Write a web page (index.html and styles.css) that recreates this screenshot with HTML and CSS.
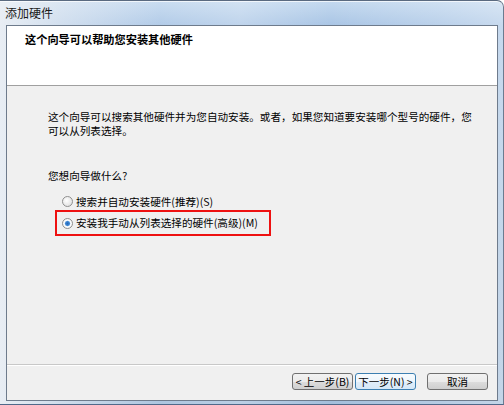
FILE: index.html
```html
<!DOCTYPE html>
<html lang="zh-CN">
<head>
<meta charset="utf-8">
<title>添加硬件</title>
<link rel="stylesheet" href="styles.css">
</head>
<body>
<div class="window">
  <div class="titlebar"><span class="title">添加硬件</span></div>
  <div class="client">
    <div class="header">
      <div class="header-title">这个向导可以帮助您安装其他硬件</div>
    </div>
    <div class="body">
      <p class="intro">这个向导可以搜索其他硬件并为您自动安装。或者，如果您知道要安装哪个型号的硬件，您<br>可以从列表选择。</p>
      <p class="question">您想向导做什么?</p>
      <div class="options">
        <label class="option"><span class="radio"></span><span>搜索并自动安装硬件(推荐)(S)</span></label>
        <label class="option selected"><span class="radio checked"></span><span>安装我手动从列表选择的硬件(高级)(M)</span></label>
      </div>
    </div>
    <div class="footer">
      <div class="btn-pair">
        <button class="btn">&lt; 上一步(B)</button>
        <button class="btn focused">下一步(N) &gt;</button>
      </div>
      <button class="btn cancel">取消</button>
    </div>
  </div>
</div>
</body>
</html>
```
FILE: styles.css
```css
* { box-sizing: border-box; }
html, body { margin: 0; padding: 0; }
body {
  width: 504px;
  height: 405px;
  overflow: hidden;
  background: #fff;
  font-family: "Noto Sans CJK SC", "Liberation Sans", sans-serif;
  color: #000;
}
.window {
  width: 504px;
  height: 405px;
  display: flex;
  flex-direction: column;
  border-radius: 0 7px 0 0;
  background:
    linear-gradient(90deg, rgba(236,240,245,0.95) 0, rgba(236,240,245,0.6) 60px, rgba(255,255,255,0.1) 160px, rgba(255,255,255,0.25) 240px, rgba(255,255,255,0) 330px, rgba(255,255,255,0.2) 440px, rgba(255,255,255,0.35) 504px),
    linear-gradient(180deg, #c4d9ef 0, #a9c5e5 25px, #a4bfdc 100%);
  border-top: 1px solid #5a6a80;
  border-right: 1px solid #6b7b90;
  border-bottom: 1px solid #50698a;
  box-shadow: inset 0 1px 0 rgba(255,255,255,0.7);
  padding: 0 5px 3px 6px;
}
.titlebar {
  height: 24px;
  display: flex;
  align-items: center;
  margin-left: -6px;
}
.title {
  font-size: 12px;
  line-height: 14px;
  padding-left: 5px;
  color: #1a1a1a;
}
.client {
  flex: 1;
  display: flex;
  flex-direction: column;
  background: #f0f0f0;
  border: 1px solid #6e7b8c;
}
.header {
  height: 60px;
  background: #fff;
  border-bottom: 1px solid #a0a0a0;
  padding: 6px 0 0 18px;
}
.header-title {
  font-size: 11.2px;
  font-weight: bold;
  line-height: 14px;
}
.body {
  flex: 1;
  padding: 24px 0 0 41px;
  font-size: 10.6px;
  line-height: 14px;
  border-bottom: 1px solid #c8c8c8;
}
.intro { margin: 0; }
.question { margin: 31px 0 0 0; }
.options {
  margin-top: 11px;
  padding-left: 14px;
  display: flex;
  flex-direction: column;
  gap: 7px;
}
.option {
  display: flex;
  align-items: center;
  gap: 3px;
  height: 15px;
}
.option.selected {
  margin-left: -7px;
  padding-left: 5px;
  width: 216px;
  height: 26px;
  border: 2px solid #ee1111;
  margin-top: -6px;
}
.radio {
  width: 11px;
  height: 11px;
  border-radius: 50%;
  border: 1px solid #8f8f8f;
  background: radial-gradient(circle at 40% 40%, #ffffff 0, #e4e4e4 70%, #d0d0d0 100%);
  flex: none;
}
.radio.checked {
  background: radial-gradient(circle at 50% 50%, #2566b4 0, #3c86d4 2px, #ffffff 3.2px, #e6e6e6 100%);
}
.footer {
  height: 35px;
  border-top: 1px solid #ffffff;
  display: flex;
  align-items: flex-start;
  justify-content: flex-end;
  padding: 7px 9px 0 0;
  gap: 11px;
}
.btn-pair { display: flex; gap: 2px; }
.btn {
  height: 17px;
  width: 61px;
  padding: 0;
  font-family: "Noto Sans CJK SC", "Liberation Sans", sans-serif;
  font-size: 10.5px;
  line-height: 15px;
  color: #000;
  border: 1px solid #707070;
  border-radius: 3px;
  background: linear-gradient(180deg, #f2f2f2 0, #ebebeb 50%, #dddddd 51%, #cfcfcf 100%);
}
.btn.focused {
  border-color: #3c7fb1;
  background: linear-gradient(180deg, #f7fbfe 0, #eef6fc 50%, #e1eef9 51%, #d6e8f7 100%);
}
.btn.cancel { width: 61px; }
```
